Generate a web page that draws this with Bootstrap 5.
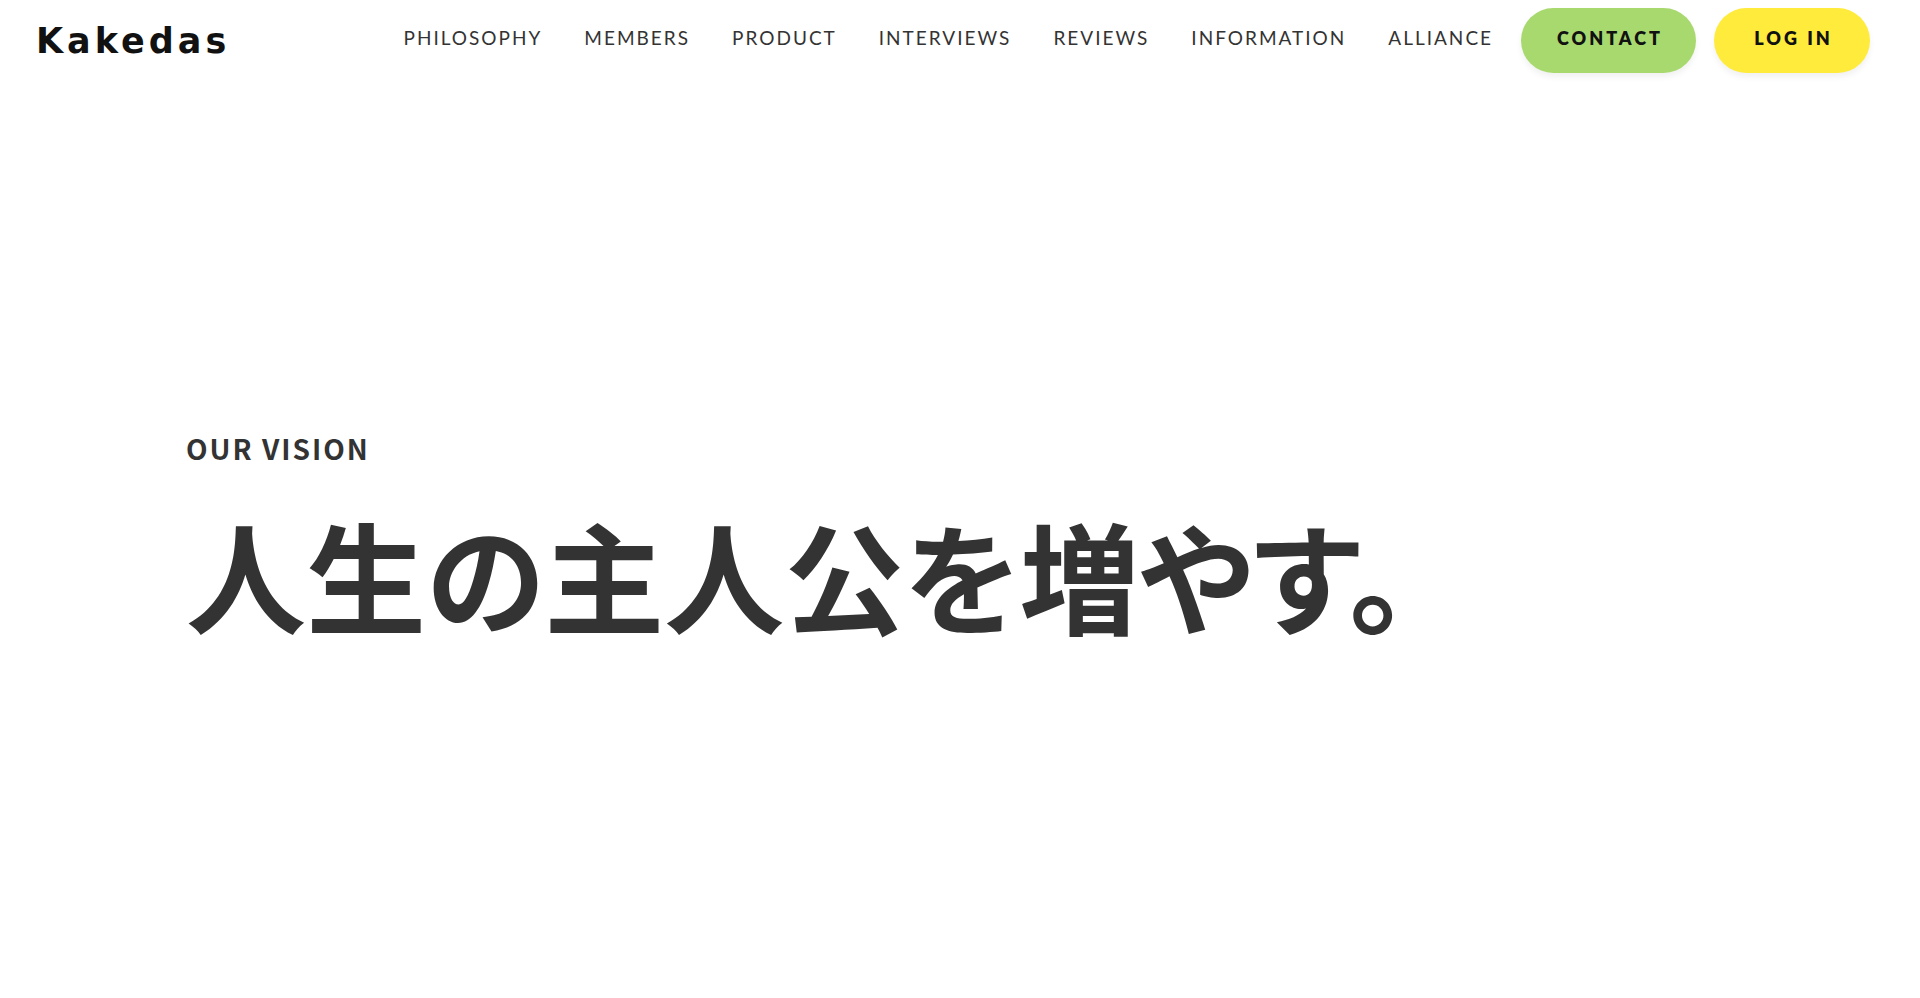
<!DOCTYPE html>
<html lang="ja">
<head>
<meta charset="utf-8">
<meta name="viewport" content="width=device-width, initial-scale=1">
<title>Kakedas</title>
<link href="https://cdn.jsdelivr.net/npm/bootstrap@5.3.0/dist/css/bootstrap.min.css" rel="stylesheet">
<style>
body { background: #fff; color: #333; font-family: "Noto Sans CJK JP", sans-serif; }
.site-nav { --bs-navbar-padding-y: 8px; padding-left: 36px; padding-right: 50px; }
.brand-name { font: 700 35px/50px "DejaVu Sans", sans-serif; letter-spacing: 4px; color: #111; }
.menu-list { column-gap: 42px; margin: 0 28px 6px 0; }
.menu-list a, .pill { font-family: Lato, sans-serif; line-height: 24px; }
.menu-list a { color: #333; font-size: 19px; letter-spacing: 2px; }
.pill { min-width: 156px; color: #111; font-size: 18px; font-weight: 800; letter-spacing: 3px; padding: 18px 33px 23px 36px; border: 0; border-radius: 33px; box-shadow: 0 4px 6px rgba(0,0,0,.06); }
.pill-contact { background: #a8d96f; }
.pill-login { background: #ffeb3b; }
.pill-group { gap: 18px; }
.hero { padding: 343px 186px 0; }
.hero-label { font-size: 28px; line-height: 48px; font-weight: 700; letter-spacing: 2px; margin-bottom: 12px; }
.hero-title { font-size: 120px; line-height: 180px; font-weight: 700; font-feature-settings: "palt"; }
</style>
</head>
<body>
<header>
<nav class="navbar navbar-expand-lg site-nav d-flex align-items-center" aria-label="Main">
  <a class="navbar-brand brand-name p-0 m-0" href="#">Kakedas</a>
  <div class="d-flex align-items-center ms-auto">
    <ul class="menu-list list-unstyled d-flex">
      <li><a class="text-decoration-none" href="#philosophy">PHILOSOPHY</a></li>
      <li><a class="text-decoration-none" href="#members">MEMBERS</a></li>
      <li><a class="text-decoration-none" href="#product">PRODUCT</a></li>
      <li><a class="text-decoration-none" href="#interviews">INTERVIEWS</a></li>
      <li><a class="text-decoration-none" href="#reviews">REVIEWS</a></li>
      <li><a class="text-decoration-none" href="#information">INFORMATION</a></li>
      <li><a class="text-decoration-none" href="#alliance">ALLIANCE</a></li>
    </ul>
    <div class="pill-group d-flex">
      <a class="btn pill pill-contact" href="#contact">CONTACT</a>
      <a class="btn pill pill-login" href="#login">LOG IN</a>
    </div>
  </div>
</nav>
</header>
<main class="hero" id="philosophy">
  <p class="hero-label">OUR VISION</p>
  <h1 class="hero-title mb-0">人生の主人公を増やす。</h1>
</main>
<script src="https://cdn.jsdelivr.net/npm/bootstrap@5.3.0/dist/js/bootstrap.bundle.min.js"></script>
</body>
</html>
